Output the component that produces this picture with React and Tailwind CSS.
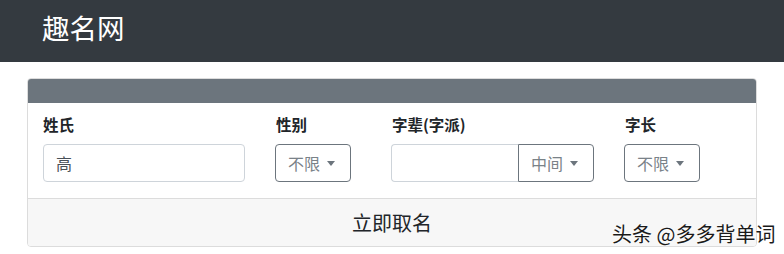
const font = { fontFamily: '"Noto Sans CJK SC", "Noto Sans", sans-serif' };

const Caret = () => (
  <span className="ml-[7px] inline-block w-0 h-0 border-x-[4px] border-x-transparent border-t-[5px] border-t-[#6c757d] align-middle" />
);

const DropBtn = ({ label, className = "" }) => (
  <button className={`h-[38px] px-[12px] border border-[#6c757d] text-[#7a8288] text-[16px] flex items-center bg-white ${className}`}>
    {label}
    <Caret />
  </button>
);

const Field = ({ label, children }) => (
  <div>
    <div className="text-[15.5px] leading-[22px] font-bold text-[#212529] mb-[9px]">{label}</div>
    {children}
  </div>
);

export default function App() {
  return (
    <div className="relative w-[784px] h-[254px] bg-white overflow-hidden" style={font}>
      <header className="h-[62px] bg-[#343a40] flex items-center pl-[42px] pb-[6px]">
        <span className="text-white text-[27.5px] leading-none">趣名网</span>
      </header>

      <div className="ml-[27px] mt-[16px] w-[730px] border border-[#dcdcdc] rounded-[4px] overflow-hidden">
        <div className="h-[24px] bg-[#6c757d]" />
        <div className="pl-[15px] pt-[10px] pb-[16px] grid grid-cols-[233px_116px_233px_1fr]">
          <Field label="姓氏">
            <div className="w-[202px] h-[38px] border border-[#ced4da] rounded-[4px] flex items-center px-[12px] text-[16px] text-[#495057]">
              高
            </div>
          </Field>
          <Field label="性别">
            <DropBtn label="不限" className="w-[76px] rounded-[4px] -ml-px" />
          </Field>
          <Field label="字辈(字派)">
            <div className="flex -ml-px">
              <div className="w-[127px] h-[38px] border border-[#ced4da] border-r-0 rounded-l-[4px]" />
              <DropBtn label="中间" className="w-[76px] rounded-r-[4px]" />
            </div>
          </Field>
          <Field label="字长">
            <DropBtn label="不限" className="w-[76px] rounded-[4px] -ml-px" />
          </Field>
        </div>
        <div className="h-[48px] bg-[#f7f7f7] border-t border-[#dcdcdc] flex items-center justify-center text-[20px] text-[#212529]">
          立即取名
        </div>
      </div>

      <div
        className="absolute left-[612px] top-[221px] text-[20px] leading-[26px] text-[#1a1a1a]"
        style={{ textShadow: "0 0 2px #fff, 0 0 2px #fff" }}
      >
        头条 @多多背单词
      </div>
    </div>
  );
}
